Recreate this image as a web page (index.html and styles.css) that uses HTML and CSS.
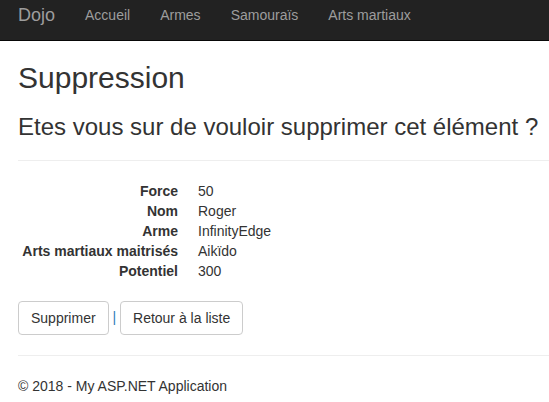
FILE: index.html
```html
<!DOCTYPE html>
<html lang="fr">
<head>
<meta charset="utf-8">
<title>Suppression - Dojo</title>
<link rel="stylesheet" href="styles.css">
</head>
<body>
<nav class="navbar">
  <div class="container nav-inner">
    <a class="brand" href="#">Dojo</a>
    <ul class="nav">
      <li><a href="#">Accueil</a></li>
      <li><a href="#">Armes</a></li>
      <li><a href="#">Samouraïs</a></li>
      <li><a href="#">Arts martiaux</a></li>
    </ul>
  </div>
</nav>
<div class="container body-content">
  <h2>Suppression</h2>
  <h3>Etes vous sur de vouloir supprimer cet élément ?</h3>
  <div>
    <hr>
    <dl class="dl-horizontal">
      <dt>Force</dt><dd>50</dd>
      <dt>Nom</dt><dd>Roger</dd>
      <dt>Arme</dt><dd>InfinityEdge</dd>
      <dt>Arts martiaux maitrisés</dt><dd>Aikïdo</dd>
      <dt>Potentiel</dt><dd>300</dd>
    </dl>
    <form class="form-actions">
      <button type="button" class="btn">Supprimer</button> <span class="sep">|</span> <a class="btn" href="#">Retour à la liste</a>
    </form>
  </div>
  <hr>
  <footer>
    <p>© 2018 - My ASP.NET Application</p>
  </footer>
</div>
</body>
</html>
```
FILE: styles.css
```css
* { box-sizing: border-box; }
html, body { margin: 0; padding: 0; }
body {
  font-family: "Liberation Sans", Arial, sans-serif;
  font-size: 14px;
  line-height: 20px;
  color: #333;
  background: #fff;
}
a { text-decoration: none; }
.container { padding: 0 0 0 18px; }

.navbar {
  background: #222;
  border-bottom: 1px solid #080808;
  height: 41px;
}
.nav-inner { display: flex; align-items: flex-start; }
.brand {
  font-size: 18px;
  line-height: 20px;
  color: #9d9d9d;
  padding-top: 5px;
  height: 40px;
}
.nav {
  list-style: none;
  margin: 0 0 0 15px;
  padding: 0;
  display: flex;
}
.nav a {
  display: block;
  color: #9d9d9d;
  padding: 5px 15px 0;
  line-height: 20px;
}

h2, h3 {
  font-weight: 500;
  line-height: 1.1;
  margin: 20px 0 10px;
}
h2 { font-size: 30px; }
h3 { font-size: 24px; white-space: nowrap; }

hr {
  border: 0;
  border-top: 1px solid #eee;
  margin: 20px 0;
  height: 0;
}

.dl-horizontal {
  margin: 0 0 20px;
  display: grid;
  grid-template-columns: 160px 1fr;
  column-gap: 20px;
}
.dl-horizontal dt {
  font-weight: bold;
  text-align: right;
  white-space: nowrap;
}
.dl-horizontal dd { margin: 0; }

.form-actions { margin: 0; }
.btn {
  display: inline-block;
  font-family: inherit;
  font-size: 14px;
  line-height: 20px;
  padding: 6px 12px;
  color: #333;
  background: #fff;
  border: 1px solid #ccc;
  border-radius: 4px;
  vertical-align: middle;
  margin: 0;
}
.sep { color: #337ab7; }

footer p { margin: 0 0 10px; }
```
